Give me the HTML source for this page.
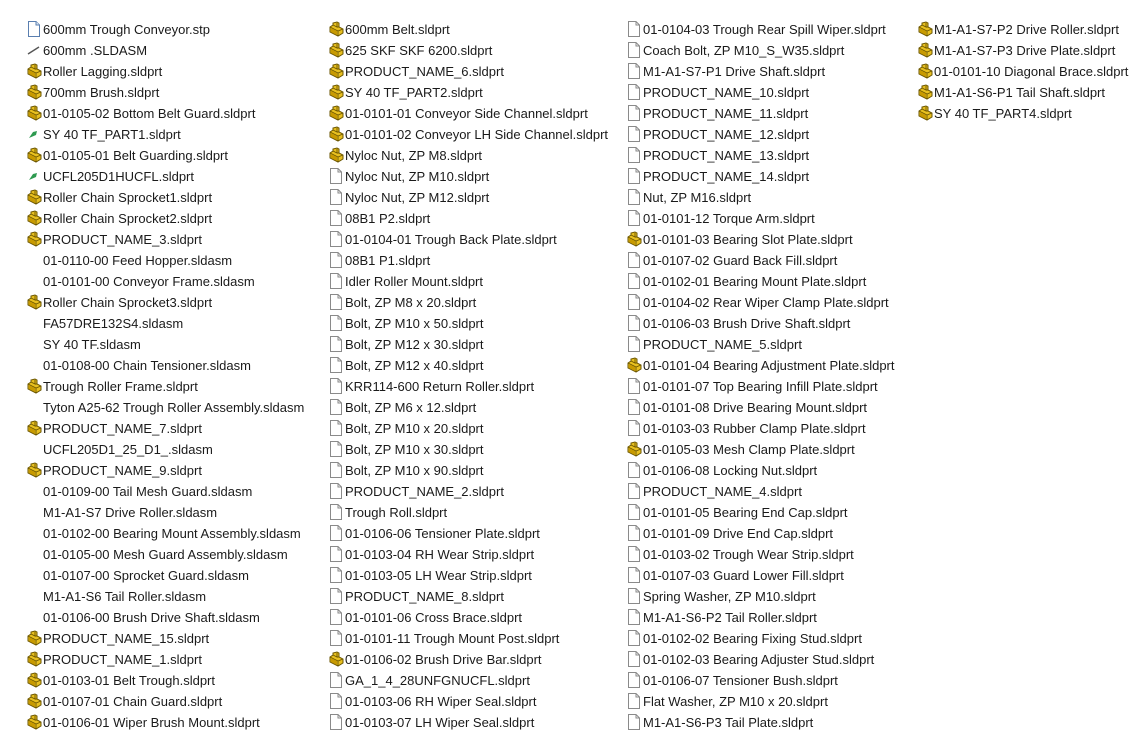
<!DOCTYPE html>
<html><head><meta charset="utf-8"><style>
html,body{margin:0;padding:0;background:#fff;width:1137px;height:745px;overflow:hidden}
body{font-family:"Liberation Sans","Noto Sans CJK SC",sans-serif;font-size:13px;color:#1a1a1a}
.c{position:absolute;top:19px}
.r{height:21px;line-height:21px;white-space:nowrap;position:relative;padding-left:17px}
.r svg{position:absolute;left:0;top:2px}
</style></head><body>
<svg width="0" height="0" style="position:absolute">
<defs>
<symbol id="y" viewBox="0 0 16 16"><path d="M2 6 L5 4 L5 2 L9 1 L11 2 L11 6 L15 8 L15 12 L10 15 L2 11 Z" fill="#e8c020" stroke="#6b5600" stroke-width="1"/><path d="M2 6 L10 10 L15 8 M10 10 L10 15 M5 4 L9 6 L9 2 M9 6 L11 6" fill="none" stroke="#6b5600" stroke-width="0.9"/><path d="M3 7 L9 10 L9 14 L3 11Z" fill="#c89a00"/></symbol>
<symbol id="f" viewBox="0 0 16 16"><path d="M2.5 0.5 H10 L13.5 4 V15.5 H2.5 Z" fill="#fff" stroke="#8a8a8a"/><path d="M10 0.5 V4 H13.5" fill="none" stroke="#8a8a8a"/></symbol>
<symbol id="b" viewBox="0 0 16 16"><path d="M2.5 0.5 H10 L13.5 4 V15.5 H2.5 Z" fill="#fff" stroke="#5a7fb0"/><path d="M10 0.5 V4 H13.5" fill="#dde8f6" stroke="#5a7fb0"/></symbol>
<symbol id="l" viewBox="0 0 16 16"><path d="M2 12 L13 5" stroke="#555" stroke-width="1.4"/></symbol>
<symbol id="g" viewBox="0 0 16 16"><path d="M3 12 L7 6 L11 5 L10 9 Z" fill="#2e9a50"/></symbol>
</defs></svg>

<div class="c" style="left:26px">
<div class="r"><svg width="16" height="16"><use href="#b"/></svg>600mm Trough Conveyor.stp</div>
<div class="r"><svg width="16" height="16"><use href="#l"/></svg>600mm .SLDASM</div>
<div class="r"><svg width="16" height="16"><use href="#y"/></svg>Roller Lagging.sldprt</div>
<div class="r"><svg width="16" height="16"><use href="#y"/></svg>700mm Brush.sldprt</div>
<div class="r"><svg width="16" height="16"><use href="#y"/></svg>01-0105-02 Bottom Belt Guard.sldprt</div>
<div class="r"><svg width="16" height="16"><use href="#g"/></svg>SY 40 TF_PART1.sldprt</div>
<div class="r"><svg width="16" height="16"><use href="#y"/></svg>01-0105-01 Belt Guarding.sldprt</div>
<div class="r"><svg width="16" height="16"><use href="#g"/></svg>UCFL205D1HUCFL.sldprt</div>
<div class="r"><svg width="16" height="16"><use href="#y"/></svg>Roller Chain Sprocket1.sldprt</div>
<div class="r"><svg width="16" height="16"><use href="#y"/></svg>Roller Chain Sprocket2.sldprt</div>
<div class="r"><svg width="16" height="16"><use href="#y"/></svg>PRODUCT_NAME_3.sldprt</div>
<div class="r">01-0110-00 Feed Hopper.sldasm</div>
<div class="r">01-0101-00 Conveyor Frame.sldasm</div>
<div class="r"><svg width="16" height="16"><use href="#y"/></svg>Roller Chain Sprocket3.sldprt</div>
<div class="r">FA57DRE132S4.sldasm</div>
<div class="r">SY 40 TF.sldasm</div>
<div class="r">01-0108-00 Chain Tensioner.sldasm</div>
<div class="r"><svg width="16" height="16"><use href="#y"/></svg>Trough Roller Frame.sldprt</div>
<div class="r">Tyton A25-62 Trough Roller Assembly.sldasm</div>
<div class="r"><svg width="16" height="16"><use href="#y"/></svg>PRODUCT_NAME_7.sldprt</div>
<div class="r">UCFL205D1_25_D1_.sldasm</div>
<div class="r"><svg width="16" height="16"><use href="#y"/></svg>PRODUCT_NAME_9.sldprt</div>
<div class="r">01-0109-00 Tail Mesh Guard.sldasm</div>
<div class="r">M1-A1-S7 Drive Roller.sldasm</div>
<div class="r">01-0102-00 Bearing Mount Assembly.sldasm</div>
<div class="r">01-0105-00 Mesh Guard Assembly.sldasm</div>
<div class="r">01-0107-00 Sprocket Guard.sldasm</div>
<div class="r">M1-A1-S6 Tail Roller.sldasm</div>
<div class="r">01-0106-00 Brush Drive Shaft.sldasm</div>
<div class="r"><svg width="16" height="16"><use href="#y"/></svg>PRODUCT_NAME_15.sldprt</div>
<div class="r"><svg width="16" height="16"><use href="#y"/></svg>PRODUCT_NAME_1.sldprt</div>
<div class="r"><svg width="16" height="16"><use href="#y"/></svg>01-0103-01 Belt Trough.sldprt</div>
<div class="r"><svg width="16" height="16"><use href="#y"/></svg>01-0107-01 Chain Guard.sldprt</div>
<div class="r"><svg width="16" height="16"><use href="#y"/></svg>01-0106-01 Wiper Brush Mount.sldprt</div>
</div>

<div class="c" style="left:328px">
<div class="r"><svg width="16" height="16"><use href="#y"/></svg>600mm Belt.sldprt</div>
<div class="r"><svg width="16" height="16"><use href="#y"/></svg>625 SKF SKF 6200.sldprt</div>
<div class="r"><svg width="16" height="16"><use href="#y"/></svg>PRODUCT_NAME_6.sldprt</div>
<div class="r"><svg width="16" height="16"><use href="#y"/></svg>SY 40 TF_PART2.sldprt</div>
<div class="r"><svg width="16" height="16"><use href="#y"/></svg>01-0101-01 Conveyor Side Channel.sldprt</div>
<div class="r"><svg width="16" height="16"><use href="#y"/></svg>01-0101-02 Conveyor LH Side Channel.sldprt</div>
<div class="r"><svg width="16" height="16"><use href="#y"/></svg>Nyloc Nut, ZP M8.sldprt</div>
<div class="r"><svg width="16" height="16"><use href="#f"/></svg>Nyloc Nut, ZP M10.sldprt</div>
<div class="r"><svg width="16" height="16"><use href="#f"/></svg>Nyloc Nut, ZP M12.sldprt</div>
<div class="r"><svg width="16" height="16"><use href="#f"/></svg>08B1 P2.sldprt</div>
<div class="r"><svg width="16" height="16"><use href="#f"/></svg>01-0104-01 Trough Back Plate.sldprt</div>
<div class="r"><svg width="16" height="16"><use href="#f"/></svg>08B1 P1.sldprt</div>
<div class="r"><svg width="16" height="16"><use href="#f"/></svg>Idler Roller Mount.sldprt</div>
<div class="r"><svg width="16" height="16"><use href="#f"/></svg>Bolt, ZP M8 x 20.sldprt</div>
<div class="r"><svg width="16" height="16"><use href="#f"/></svg>Bolt, ZP M10 x 50.sldprt</div>
<div class="r"><svg width="16" height="16"><use href="#f"/></svg>Bolt, ZP M12 x 30.sldprt</div>
<div class="r"><svg width="16" height="16"><use href="#f"/></svg>Bolt, ZP M12 x 40.sldprt</div>
<div class="r"><svg width="16" height="16"><use href="#f"/></svg>KRR114-600 Return Roller.sldprt</div>
<div class="r"><svg width="16" height="16"><use href="#f"/></svg>Bolt, ZP M6 x 12.sldprt</div>
<div class="r"><svg width="16" height="16"><use href="#f"/></svg>Bolt, ZP M10 x 20.sldprt</div>
<div class="r"><svg width="16" height="16"><use href="#f"/></svg>Bolt, ZP M10 x 30.sldprt</div>
<div class="r"><svg width="16" height="16"><use href="#f"/></svg>Bolt, ZP M10 x 90.sldprt</div>
<div class="r"><svg width="16" height="16"><use href="#f"/></svg>PRODUCT_NAME_2.sldprt</div>
<div class="r"><svg width="16" height="16"><use href="#f"/></svg>Trough Roll.sldprt</div>
<div class="r"><svg width="16" height="16"><use href="#f"/></svg>01-0106-06 Tensioner Plate.sldprt</div>
<div class="r"><svg width="16" height="16"><use href="#f"/></svg>01-0103-04 RH Wear Strip.sldprt</div>
<div class="r"><svg width="16" height="16"><use href="#f"/></svg>01-0103-05 LH Wear Strip.sldprt</div>
<div class="r"><svg width="16" height="16"><use href="#f"/></svg>PRODUCT_NAME_8.sldprt</div>
<div class="r"><svg width="16" height="16"><use href="#f"/></svg>01-0101-06 Cross Brace.sldprt</div>
<div class="r"><svg width="16" height="16"><use href="#f"/></svg>01-0101-11 Trough Mount Post.sldprt</div>
<div class="r"><svg width="16" height="16"><use href="#y"/></svg>01-0106-02 Brush Drive Bar.sldprt</div>
<div class="r"><svg width="16" height="16"><use href="#f"/></svg>GA_1_4_28UNFGNUCFL.sldprt</div>
<div class="r"><svg width="16" height="16"><use href="#f"/></svg>01-0103-06 RH Wiper Seal.sldprt</div>
<div class="r"><svg width="16" height="16"><use href="#f"/></svg>01-0103-07 LH Wiper Seal.sldprt</div>
</div>

<div class="c" style="left:626px">
<div class="r"><svg width="16" height="16"><use href="#f"/></svg>01-0104-03 Trough Rear Spill Wiper.sldprt</div>
<div class="r"><svg width="16" height="16"><use href="#f"/></svg>Coach Bolt, ZP M10_S_W35.sldprt</div>
<div class="r"><svg width="16" height="16"><use href="#f"/></svg>M1-A1-S7-P1 Drive Shaft.sldprt</div>
<div class="r"><svg width="16" height="16"><use href="#f"/></svg>PRODUCT_NAME_10.sldprt</div>
<div class="r"><svg width="16" height="16"><use href="#f"/></svg>PRODUCT_NAME_11.sldprt</div>
<div class="r"><svg width="16" height="16"><use href="#f"/></svg>PRODUCT_NAME_12.sldprt</div>
<div class="r"><svg width="16" height="16"><use href="#f"/></svg>PRODUCT_NAME_13.sldprt</div>
<div class="r"><svg width="16" height="16"><use href="#f"/></svg>PRODUCT_NAME_14.sldprt</div>
<div class="r"><svg width="16" height="16"><use href="#f"/></svg>Nut, ZP M16.sldprt</div>
<div class="r"><svg width="16" height="16"><use href="#f"/></svg>01-0101-12 Torque Arm.sldprt</div>
<div class="r"><svg width="16" height="16"><use href="#y"/></svg>01-0101-03 Bearing Slot Plate.sldprt</div>
<div class="r"><svg width="16" height="16"><use href="#f"/></svg>01-0107-02 Guard Back Fill.sldprt</div>
<div class="r"><svg width="16" height="16"><use href="#f"/></svg>01-0102-01 Bearing Mount Plate.sldprt</div>
<div class="r"><svg width="16" height="16"><use href="#f"/></svg>01-0104-02 Rear Wiper Clamp Plate.sldprt</div>
<div class="r"><svg width="16" height="16"><use href="#f"/></svg>01-0106-03 Brush Drive Shaft.sldprt</div>
<div class="r"><svg width="16" height="16"><use href="#f"/></svg>PRODUCT_NAME_5.sldprt</div>
<div class="r"><svg width="16" height="16"><use href="#y"/></svg>01-0101-04 Bearing Adjustment Plate.sldprt</div>
<div class="r"><svg width="16" height="16"><use href="#f"/></svg>01-0101-07 Top Bearing Infill Plate.sldprt</div>
<div class="r"><svg width="16" height="16"><use href="#f"/></svg>01-0101-08 Drive Bearing Mount.sldprt</div>
<div class="r"><svg width="16" height="16"><use href="#f"/></svg>01-0103-03 Rubber Clamp Plate.sldprt</div>
<div class="r"><svg width="16" height="16"><use href="#y"/></svg>01-0105-03 Mesh Clamp Plate.sldprt</div>
<div class="r"><svg width="16" height="16"><use href="#f"/></svg>01-0106-08 Locking Nut.sldprt</div>
<div class="r"><svg width="16" height="16"><use href="#f"/></svg>PRODUCT_NAME_4.sldprt</div>
<div class="r"><svg width="16" height="16"><use href="#f"/></svg>01-0101-05 Bearing End Cap.sldprt</div>
<div class="r"><svg width="16" height="16"><use href="#f"/></svg>01-0101-09 Drive End Cap.sldprt</div>
<div class="r"><svg width="16" height="16"><use href="#f"/></svg>01-0103-02 Trough Wear Strip.sldprt</div>
<div class="r"><svg width="16" height="16"><use href="#f"/></svg>01-0107-03 Guard Lower Fill.sldprt</div>
<div class="r"><svg width="16" height="16"><use href="#f"/></svg>Spring Washer, ZP M10.sldprt</div>
<div class="r"><svg width="16" height="16"><use href="#f"/></svg>M1-A1-S6-P2 Tail Roller.sldprt</div>
<div class="r"><svg width="16" height="16"><use href="#f"/></svg>01-0102-02 Bearing Fixing Stud.sldprt</div>
<div class="r"><svg width="16" height="16"><use href="#f"/></svg>01-0102-03 Bearing Adjuster Stud.sldprt</div>
<div class="r"><svg width="16" height="16"><use href="#f"/></svg>01-0106-07 Tensioner Bush.sldprt</div>
<div class="r"><svg width="16" height="16"><use href="#f"/></svg>Flat Washer, ZP M10 x 20.sldprt</div>
<div class="r"><svg width="16" height="16"><use href="#f"/></svg>M1-A1-S6-P3 Tail Plate.sldprt</div>
</div>

<div class="c" style="left:917px">
<div class="r"><svg width="16" height="16"><use href="#y"/></svg>M1-A1-S7-P2 Drive Roller.sldprt</div>
<div class="r"><svg width="16" height="16"><use href="#y"/></svg>M1-A1-S7-P3 Drive Plate.sldprt</div>
<div class="r"><svg width="16" height="16"><use href="#y"/></svg>01-0101-10 Diagonal Brace.sldprt</div>
<div class="r"><svg width="16" height="16"><use href="#y"/></svg>M1-A1-S6-P1 Tail Shaft.sldprt</div>
<div class="r"><svg width="16" height="16"><use href="#y"/></svg>SY 40 TF_PART4.sldprt</div>
</div>
</body></html>
